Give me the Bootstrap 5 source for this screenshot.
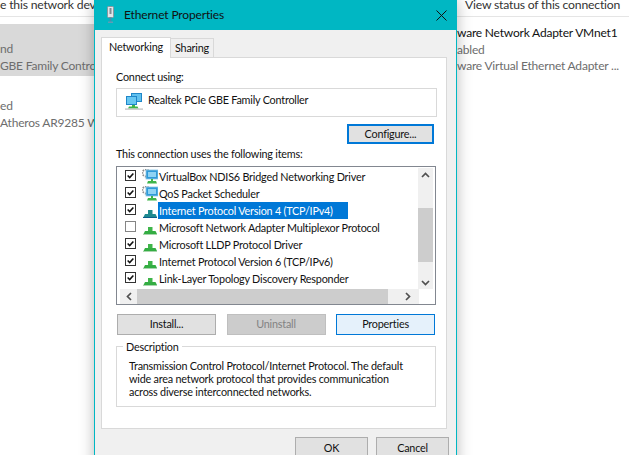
<!DOCTYPE html>
<html lang="en">
<head>
<meta charset="utf-8">
<title>Ethernet Properties</title>
<link href="https://cdn.jsdelivr.net/npm/bootstrap@5.3.0/dist/css/bootstrap.min.css" rel="stylesheet">
<style>
html,body{height:455px;overflow:hidden;background:#fff}
body{font-family:Lato,"Noto Sans","Liberation Sans",sans-serif;font-size:10.8px;letter-spacing:-.2px;color:#111;position:relative}
.bg-head{height:22px;margin-top:-5px;border-bottom:1px solid #e5e5e5;line-height:20px;font-size:12.200px;color:#333;white-space:nowrap;overflow:hidden}
.bg-col-l{width:94px;overflow:hidden;white-space:nowrap}
.bg-col-r{width:172px;overflow:hidden;white-space:nowrap}
.bg-item{height:52px;margin-top:7px;padding-top:1px;line-height:16.500px;font-size:12px;color:#6d6d6d}
.bg-item + .bg-item{margin-top:5px}
.bg-sel{background:#d9d9d9}
.bg-name{color:#111}
.dlg{position:absolute;left:94px;top:0;width:363px;height:480px;background:#f0f0f0;border:1px solid #00b7c3;box-shadow:0 0 14px rgba(0,0,0,.28);padding:0 9px 0 6px}
.dlg-title{height:29px;margin:0 -9px 0 -6px;background:#00b7c3;font-size:12px;letter-spacing:-.15px;color:#111;padding:0 0 1px 12px;gap:10px}
.dlg-x{margin-left:auto;margin-right:9px;width:11px;height:11px}
.tabrow{height:27px;align-items:flex-end}
.tabbtn{background:#f0f0f0;border:1px solid #d9d9d9;border-bottom:0;height:19px;width:44px;text-align:center;line-height:18px;margin-left:-1px}
.tabbtn.on{background:#fff;height:21px;width:70px;margin-left:0;position:relative;top:1px;z-index:1}
.panel{background:#fff;border:1px solid #d9d9d9;height:372px;padding:11px 9px 0 14px}
.lbl{line-height:16px;height:16px}
.adapter{height:29px;margin-top:3px;border:1px solid #d9d9d9;padding:3px 0 0 8px;gap:5px;width:321px;line-height:15px}
.cfgrow{margin-top:7px;width:318px}
.wbtn{border-radius:0;padding:0;font-size:10.8px;letter-spacing:-.2px;line-height:1;color:#111;background:#e1e1e1;border:1px solid #adadad;height:21px;width:99px;--bs-btn-font-size:10.8px}
.wbtn:disabled,.wbtn.disabled{background:#ccc;border-color:#bfbfbf;color:#838383;opacity:1}
.wbtn.hot{background:#e5f1fb;border-color:#0078d7}
.wbtn.cfg{width:87px;height:20px;border:2px solid #0078d7;background:#e1e1e1}
.lblgap{margin-top:2px}
.listbox{width:320px;height:139px;margin-top:4px;border:1px solid #828790;background:#fff;position:relative;padding:1px 0 0 1px}
.rows{width:300px;height:120px;overflow:hidden}
.lrow{height:17px;padding-left:7px;white-space:nowrap}
.cbx{width:11px;height:11px;border:1px solid #333;flex:none;margin-right:6px;display:block;margin-top:-2px}
.cbx.off{border:1.500px solid #858585}
.ico{flex:none;width:16px;height:16px;margin-right:0}
.ltx{padding:0 1px;line-height:17px}
.ltx.sel{background:#0078d7;color:#fff;width:190px}
.vbar{width:15px;height:121px;background:#f0f0f0;margin-right:2px}
.vthumb{width:15px;height:54px;background:#cdcdcd}
.vspacer-a{height:40px;padding-top:4px}
.vspacer-b{height:27px;padding-bottom:3px}
.hbar{height:15px;width:299px;margin-left:2px;background:#f0f0f0}
.hend{width:17px;height:15px;flex:none}
.hthumb{width:251px;height:15px;background:#cdcdcd}
.btnrow{width:320px;margin-top:9px;padding:0 1px;justify-content:space-between}
.grp{width:320px;height:61px;margin-top:11px;border:1px solid #d9d9d9;position:relative;padding:12px 0 0 12px;line-height:13px}
.grp-leg{position:absolute;left:6px;top:-8px;background:#fff;padding:0 3px;line-height:16px}
.foot{margin-top:8px;margin-right:-2px;gap:8px;justify-content:flex-end}
.foot .wbtn{width:73px;height:23px}
.vstat{left:465px;top:-5px;line-height:20px;font-size:12.200px;color:#333;white-space:nowrap}
.defs-holder{position:absolute}
</style>
</head>
<body>
<svg width="0" height="0" class="defs-holder">
  <defs>
    <symbol id="tw" viewBox="0 0 16 16"><path d="M6 7h4.500v4H6z" fill="#3fb54a"/><path d="M3 11h10.500l1.500 3H1.500z" fill="#34ad43"/><rect x="1" y="14" width="14" height="1" fill="#a9d6ad"/></symbol>
    <symbol id="tws" viewBox="0 0 16 16"><path d="M6 7h4.500v4H6z" fill="#1e8b8b"/><path d="M3 11h10.500l1.500 3H1.500z" fill="#1f8a90"/><rect x="1" y="14" width="14" height="1" fill="#0a5f8a"/></symbol>
    <symbol id="vb" viewBox="0 0 16 16"><circle cx="4" cy="4" r="3.500" fill="none" stroke="#8b8b8b" stroke-width="1.800" stroke-dasharray="1.500 1"/><rect x="4" y="1" width="12" height="9" fill="#2f9ad8" stroke="#8cc6e6" stroke-width=".8"/><rect x="6" y="3" width="8" height="5" fill="#8fd3f4"/><path d="M9 10h2v2h3l1 2.500H5l1-2.500h3z" fill="#3fb54a"/></symbol>
    <symbol id="nic" viewBox="0 0 18 18"><rect x="6" y="1" width="11" height="9" fill="#1f86c8"/><rect x="7" y="2" width="9" height="7" fill="#5fc0ee"/><rect x="1" y="4" width="11" height="9" fill="#1f86c8"/><rect x="2" y="5" width="9" height="7" fill="#67c7f2"/><path d="M7 13h3v1.500h2.500l1 2H3l1-2h3z" fill="#3fb54a"/><rect x="0" y="16.500" width="18" height="1.200" fill="#bcbcbc"/></symbol>
  </defs>
</svg>

<div class="bg-head">e this network device</div>
<div class="d-flex justify-content-between">
  <div class="bg-col-l">
    <div class="bg-item bg-sel"><div class="lbl">&nbsp;</div><div>nd</div><div>GBE Family Controller</div></div>
    <div class="bg-item"><div class="lbl">&nbsp;</div><div>ed</div><div>Atheros AR9285 Wireless</div></div>
  </div>
  <div class="bg-col-r">
    <div class="bg-item"><div class="bg-name">ware Network Adapter VMnet1</div><div>abled</div><div>ware Virtual Ethernet Adapter ...</div></div>
  </div>
</div>

<div class="vstat position-absolute">View status of this connection</div>

<div class="dlg" role="dialog">
  <div class="dlg-title d-flex align-items-center">
    <svg width="7" height="18" viewBox="0 0 7 18"><rect x=".5" y=".5" width="6" height="11" rx="1" fill="#dfe6ea" stroke="#8b979e"/><rect x="2.500" y="2" width="2" height="6" fill="#7f8c94"/><rect x="2.500" y="11.500" width="2" height="5" fill="#3f8fb0"/><rect x="1" y="15.500" width="5" height="1.500" fill="#5f9db5"/></svg>
    <span>Ethernet Properties</span>
    <svg class="dlg-x" viewBox="0 0 11 11"><path d="M.5.5l10 10M10.500.5l-10 10" stroke="#111" stroke-width="1"/></svg>
  </div>
  <div class="tabrow d-flex">
    <div class="tabbtn on">Networking</div>
    <div class="tabbtn">Sharing</div>
  </div>
  <div class="panel">
    <div class="lbl">Connect using:</div>
    <div class="adapter d-flex align-items-start">
      <svg width="18" height="18"><use href="#nic"/></svg>
      <span>Realtek PCIe GBE Family Controller</span>
    </div>
    <div class="cfgrow d-flex justify-content-end"><button type="button" class="btn wbtn cfg">Configure...</button></div>
    <div class="lbl lblgap">This connection uses the following items:</div>
    <div class="listbox">
      <div class="d-flex justify-content-between">
        <div class="rows">
          <div class="lrow d-flex align-items-center"><svg class="cbx" viewBox="0 0 11 11"><path d="M2 5.500l2.500 2.500 4.500-5" fill="none" stroke="#111" stroke-width="1.900"/></svg><svg class="ico"><use href="#vb"/></svg><span class="ltx">VirtualBox NDIS6 Bridged Networking Driver</span></div>
          <div class="lrow d-flex align-items-center"><svg class="cbx" viewBox="0 0 11 11"><path d="M2 5.500l2.500 2.500 4.500-5" fill="none" stroke="#111" stroke-width="1.900"/></svg><svg class="ico"><use href="#vb"/></svg><span class="ltx">QoS Packet Scheduler</span></div>
          <div class="lrow d-flex align-items-center"><svg class="cbx" viewBox="0 0 11 11"><path d="M2 5.500l2.500 2.500 4.500-5" fill="none" stroke="#111" stroke-width="1.900"/></svg><svg class="ico"><use href="#tws"/></svg><span class="ltx sel">Internet Protocol Version 4 (TCP/IPv4)</span></div>
          <div class="lrow d-flex align-items-center"><span class="cbx off"></span><svg class="ico"><use href="#tw"/></svg><span class="ltx">Microsoft Network Adapter Multiplexor Protocol</span></div>
          <div class="lrow d-flex align-items-center"><svg class="cbx" viewBox="0 0 11 11"><path d="M2 5.500l2.500 2.500 4.500-5" fill="none" stroke="#111" stroke-width="1.900"/></svg><svg class="ico"><use href="#tw"/></svg><span class="ltx">Microsoft LLDP Protocol Driver</span></div>
          <div class="lrow d-flex align-items-center"><svg class="cbx" viewBox="0 0 11 11"><path d="M2 5.500l2.500 2.500 4.500-5" fill="none" stroke="#111" stroke-width="1.900"/></svg><svg class="ico"><use href="#tw"/></svg><span class="ltx">Internet Protocol Version 6 (TCP/IPv6)</span></div>
          <div class="lrow d-flex align-items-center"><svg class="cbx" viewBox="0 0 11 11"><path d="M2 5.500l2.500 2.500 4.500-5" fill="none" stroke="#111" stroke-width="1.900"/></svg><svg class="ico"><use href="#tw"/></svg><span class="ltx">Link-Layer Topology Discovery Responder</span></div>
        </div>
        <div class="vbar">
          <div class="vspacer-a d-flex justify-content-center"><svg width="9" height="6" viewBox="0 0 9 6"><path d="M1 5l3.500-3.500L8 5" fill="none" stroke="#505050" stroke-width="1.700"/></svg></div>
          <div class="vthumb"></div>
          <div class="vspacer-b d-flex justify-content-center align-items-end"><svg width="9" height="6" viewBox="0 0 9 6"><path d="M1 1l3.500 3.500L8 1" fill="none" stroke="#505050" stroke-width="1.700"/></svg></div>
        </div>
      </div>
      <div class="hbar d-flex">
        <div class="hend d-flex align-items-center justify-content-center"><svg width="6" height="9" viewBox="0 0 6 9"><path d="M5 1L1.500 4.500 5 8" fill="none" stroke="#505050" stroke-width="1.700"/></svg></div>
        <div class="hthumb"></div>
        <div class="flex-grow-1 d-flex align-items-center justify-content-end pe-1 me-1"><svg width="6" height="9" viewBox="0 0 6 9"><path d="M1 1l3.500 3.500L1 8" fill="none" stroke="#505050" stroke-width="1.700"/></svg></div>
      </div>
    </div>
    <div class="btnrow d-flex">
      <button type="button" class="btn wbtn">Install...</button>
      <button type="button" class="btn wbtn" disabled>Uninstall</button>
      <button type="button" class="btn wbtn hot">Properties</button>
    </div>
    <div class="grp">
      <div class="grp-leg">Description</div>
      Transmission Control Protocol/Internet Protocol. The default<br>wide area network protocol that provides communication<br>across diverse interconnected networks.
    </div>
  </div>
  <div class="foot d-flex">
    <button type="button" class="btn wbtn">OK</button>
    <button type="button" class="btn wbtn">Cancel</button>
  </div>
</div>
</body>
</html>
